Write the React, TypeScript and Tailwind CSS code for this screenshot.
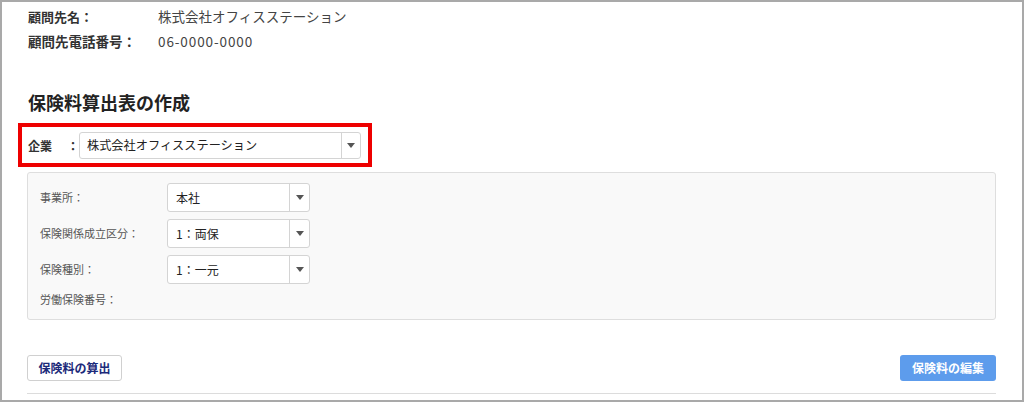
import React from 'react';

function Caret() {
  return (
    <svg width="8" height="5" viewBox="0 0 8 5" className="block">
      <path d="M0 0 L8 0 L4 5 Z" fill="#555" />
    </svg>
  );
}

interface SelectBoxProps {
  value: string;
  className: string;
  textClass: string;
  arrowWidth: string;
}

function SelectBox({ value, className, textClass, arrowWidth }: SelectBoxProps) {
  return (
    <div className={`flex items-stretch bg-white border border-[#d4d4d4] rounded-[3px] ${className}`}>
      <div className={`flex-1 flex items-center text-[#222] ${textClass}`}>{value}</div>
      <div className={`flex items-center justify-center border-l border-[#d4d4d4] ${arrowWidth}`}>
        <Caret />
      </div>
    </div>
  );
}

const fields = [
  { label: '事業所：', value: '本社' },
  { label: '保険関係成立区分：', value: '1：両保' },
  { label: '保険種別：', value: '1：一元' },
];

export default function App() {
  return (
    <div
      className="w-[1024px] h-[402px] overflow-hidden bg-white border-2 border-[#a9a9a9]"
      style={{ fontFamily: '"Noto Sans CJK JP", "Noto Sans", sans-serif' }}
    >
      <div className="pl-[25px] pr-[26px] pt-[2px]">
        <div className="flex items-center h-[25px] pl-[1px]">
          <span className="w-[130px] text-[13px] font-bold text-[#333]">顧問先名：</span>
          <span className="text-[13.5px] text-[#444]">株式会社オフィスステーション</span>
        </div>
        <div className="flex items-center h-[25px] pl-[1px]">
          <span className="w-[130px] text-[13.5px] font-bold text-[#333]">顧問先電話番号：</span>
          <span className="text-[13.5px] tracking-[0.9px] text-[#444]">06-0000-0000</span>
        </div>

        <h2 className="mt-[35px] pl-[1px] h-[34px] text-[18px] leading-[26px] font-bold text-[#222]">
          保険料算出表の作成
        </h2>

        <div className="-ml-[9px] w-[354px] h-[44px] border-4 border-[#ee0000] flex items-start pl-[6px] pr-[7px] pt-[5px]">
          <div className="flex items-center h-[27px] w-[51px] text-[12px] font-bold text-[#333]">
            <span className="w-[40px]">企業</span>
            <span>：</span>
          </div>
          <SelectBox
            value="株式会社オフィスステーション"
            className="flex-1 h-[27px]"
            textClass="pl-[7px] text-[12.2px]"
            arrowWidth="w-[19px]"
          />
        </div>

        <div className="mt-[5px] h-[148px] bg-[#f9f9f9] border border-[#dedede] rounded-[3px] pl-[12px] pt-[10px]">
          {fields.map((f) => (
            <div key={f.label} className="flex items-center h-[29px] mb-[7px]">
              <span className="w-[127px] text-[11px] text-[#555]">{f.label}</span>
              <SelectBox
                value={f.value}
                className="w-[143px] h-[29px]"
                textClass="pl-[8px] text-[12px]"
                arrowWidth="w-[20px]"
              />
            </div>
          ))}
          <div className="flex items-center h-[20px] -mt-[2px] text-[11px] text-[#555]">労働保険番号：</div>
        </div>

        <div className="mt-[35px] flex justify-between">
          <button className="w-[95px] h-[26px] bg-white border border-[#d0d0d0] rounded-[3px] text-[12px] font-bold text-[#1c2a7a]">
            保険料の算出
          </button>
          <button className="w-[96px] h-[26px] bg-[#5d9cec] rounded-[3px] text-[12px] font-bold text-white">
            保険料の編集
          </button>
        </div>

        <div className="mt-[12px] border-t border-[#dcdcdc]" />
      </div>
    </div>
  );
}
